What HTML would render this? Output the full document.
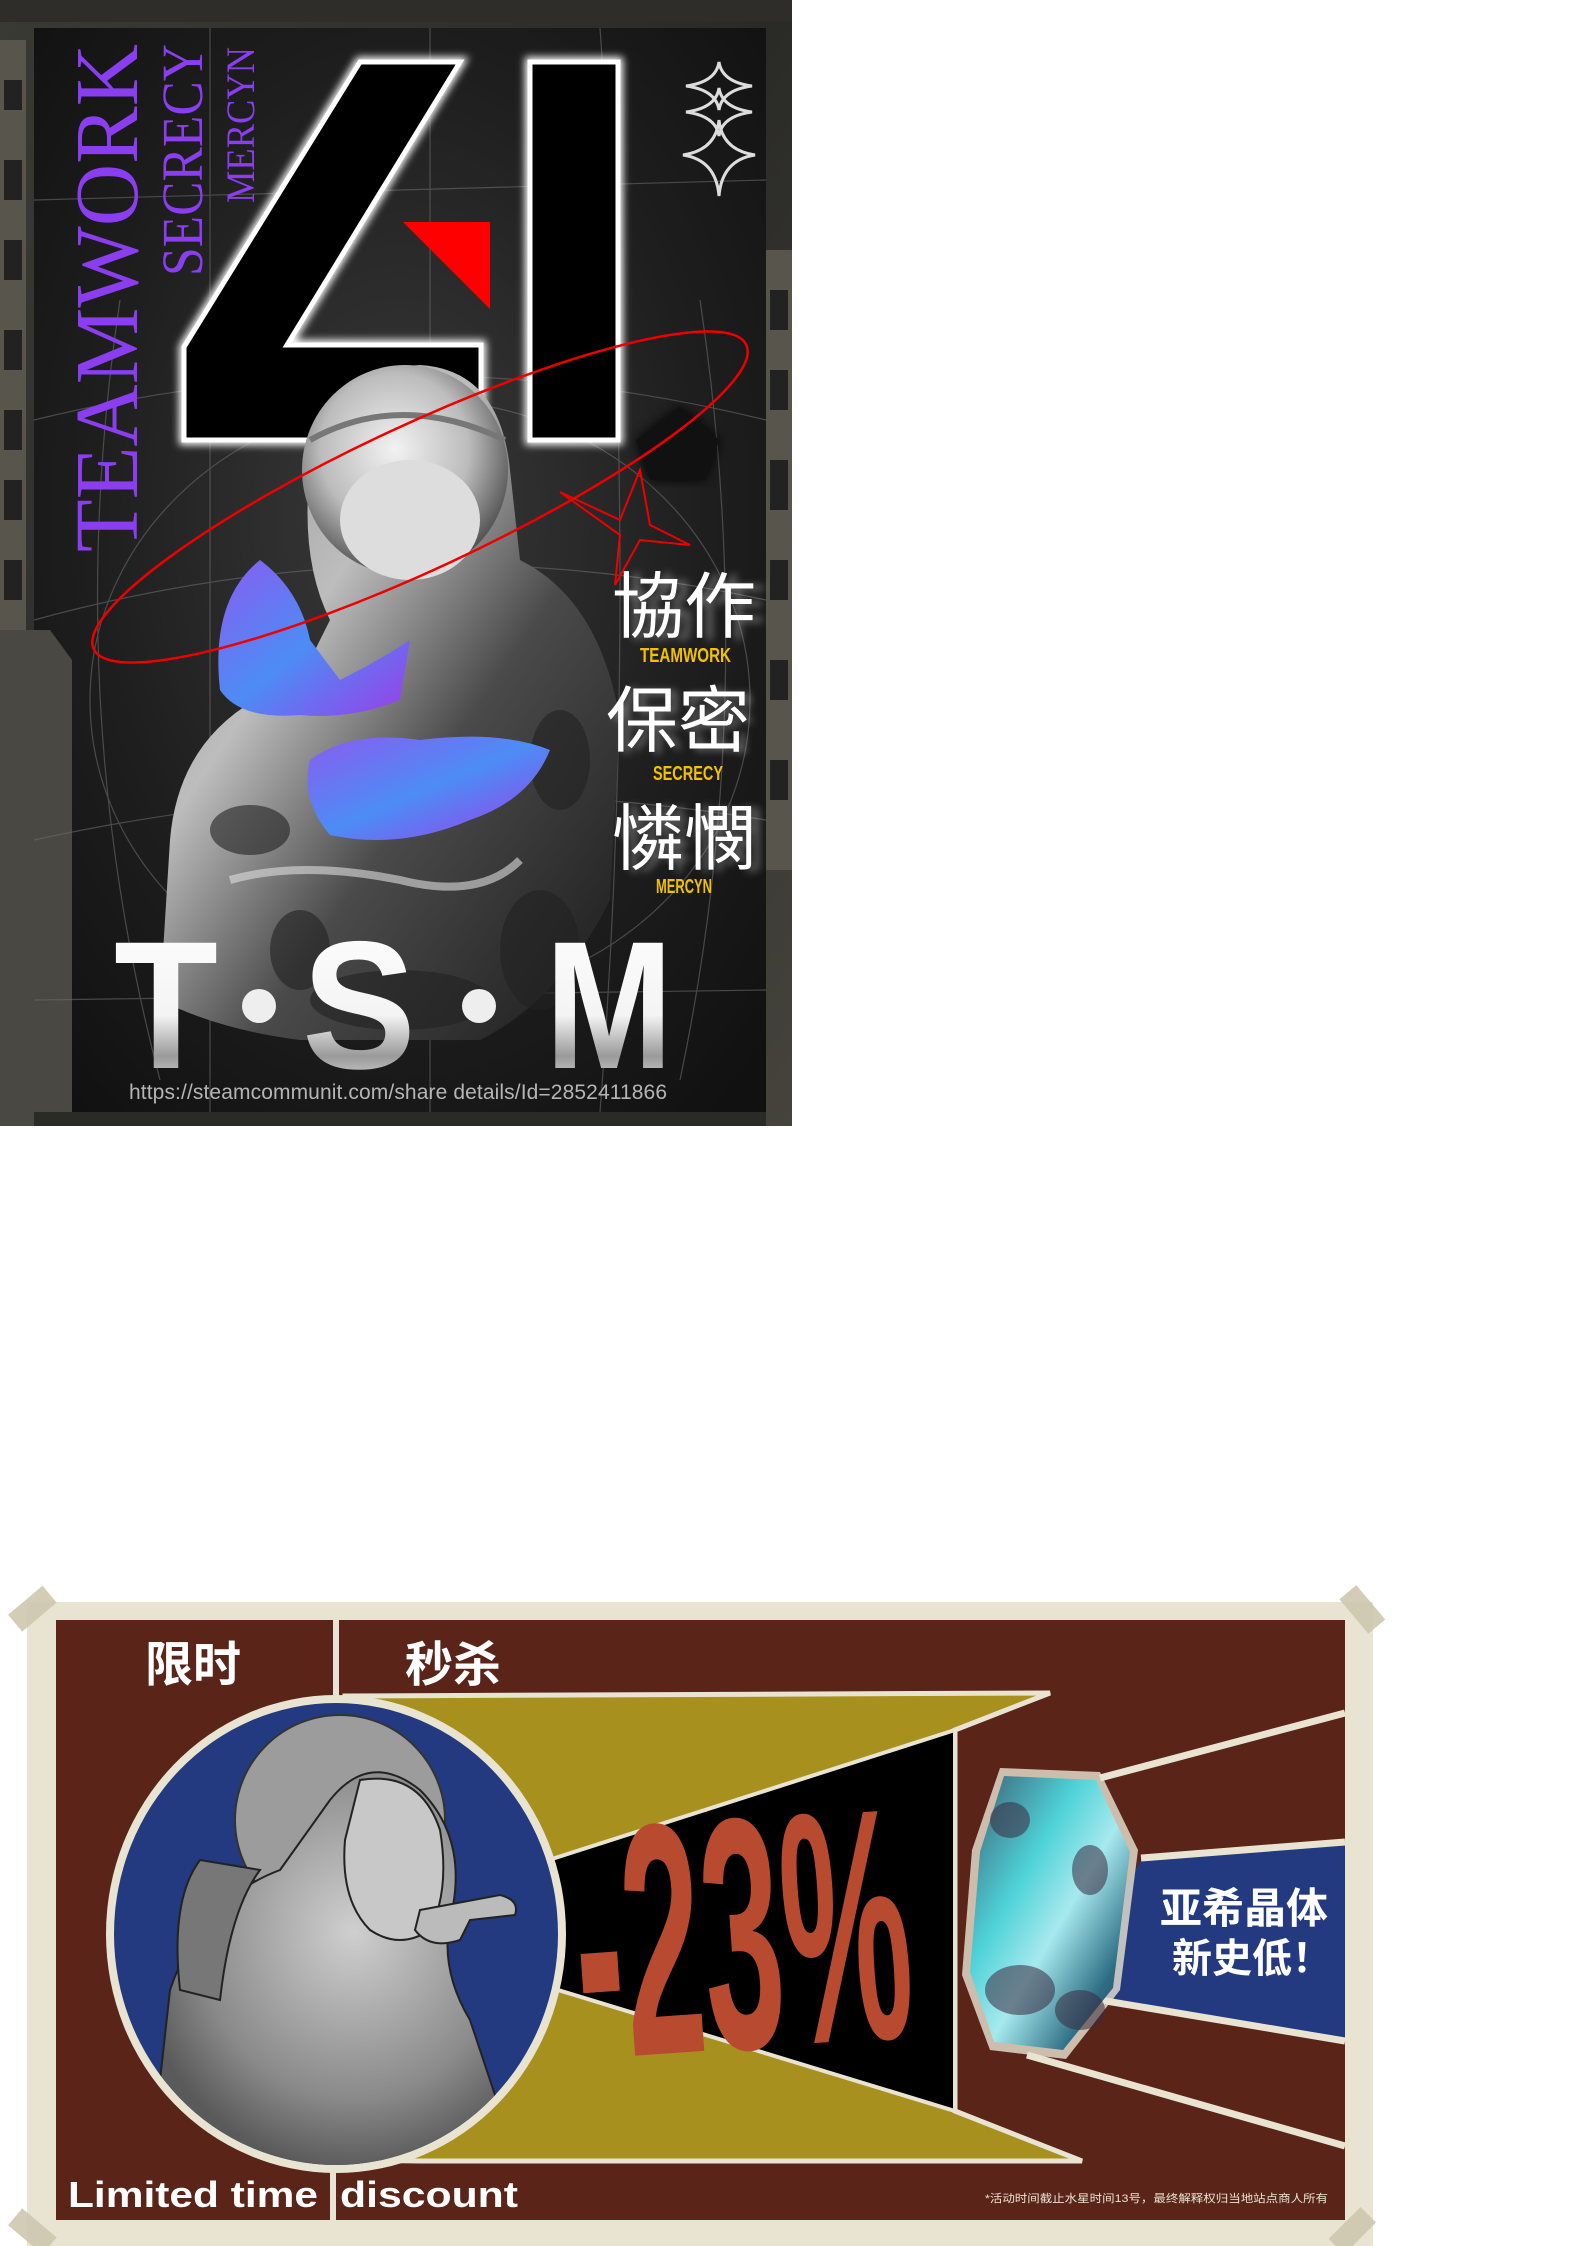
<!DOCTYPE html>
<html><head><meta charset="utf-8"><style>
html,body{margin:0;padding:0;background:#fff;width:1578px;height:2246px;overflow:hidden;position:relative}
svg{position:absolute;left:0;display:block}
</style></head><body>
<svg style="top:0" width="792" height="1126" viewBox="0 0 792 1126">
<defs>
<linearGradient id="frm" x1="0" y1="0" x2="1" y2="1"><stop offset="0" stop-color="#3a3a35"/><stop offset=".5" stop-color="#2a2a27"/><stop offset="1" stop-color="#45433c"/></linearGradient>
<radialGradient id="bgd" cx=".5" cy=".45" r=".7"><stop offset="0" stop-color="#3a3a3a"/><stop offset=".6" stop-color="#1e1e1e"/><stop offset="1" stop-color="#111"/></radialGradient>
<radialGradient id="helm" cx=".45" cy=".4" r=".6"><stop offset="0" stop-color="#f2f2f2"/><stop offset=".6" stop-color="#bcbcbc"/><stop offset="1" stop-color="#555"/></radialGradient>
<linearGradient id="body" x1="0" y1="0" x2="1" y2="1"><stop offset="0" stop-color="#8a8a8a"/><stop offset=".35" stop-color="#bdbdbd"/><stop offset=".6" stop-color="#4a4a4a"/><stop offset="1" stop-color="#1a1a1a"/></linearGradient>
<linearGradient id="lob" x1="0" y1="0" x2="1" y2="1"><stop offset="0" stop-color="#8a5cf0"/><stop offset=".5" stop-color="#4d8cf5"/><stop offset="1" stop-color="#9a3ee8"/></linearGradient>
<linearGradient id="tsm" x1="0" y1="0" x2="0" y2="1"><stop offset="0" stop-color="#fff"/><stop offset=".55" stop-color="#f4f4f4"/><stop offset=".75" stop-color="#9a9a9a"/><stop offset="1" stop-color="#fff"/></linearGradient>
<filter id="glow"><feGaussianBlur stdDeviation="4"/></filter>
<filter id="blur6"><feGaussianBlur stdDeviation="6"/></filter>
</defs>
<rect width="792" height="1126" fill="url(#frm)"/>
<rect x="0" y="0" width="792" height="22" fill="#2e2d29"/>
<rect x="0" y="40" width="26" height="600" fill="#57554c"/>
<rect x="766" y="250" width="26" height="620" fill="#57554c"/>
<g fill="#222"><rect x="4" y="80" width="18" height="30"/><rect x="4" y="160" width="18" height="40"/><rect x="4" y="240" width="18" height="40"/><rect x="4" y="330" width="18" height="40"/><rect x="4" y="410" width="18" height="40"/><rect x="4" y="480" width="18" height="40"/><rect x="4" y="560" width="18" height="40"/><rect x="770" y="290" width="18" height="40"/><rect x="770" y="370" width="18" height="40"/><rect x="770" y="460" width="18" height="50"/><rect x="770" y="560" width="18" height="40"/><rect x="770" y="660" width="18" height="40"/><rect x="770" y="760" width="18" height="40"/></g>
<rect x="34" y="28" width="732" height="1084" fill="url(#bgd)"/>
<path d="M0 630 L50 630 L72 660 L72 1126 L0 1126Z" fill="#4a4842"/>
<g stroke="#6a6a6a" stroke-width="1.2" fill="none" opacity=".6">
<path d="M34 200 L766 180 M34 420 Q400 330 766 420 M34 620 Q400 520 766 600 M34 840 Q400 760 766 820 M34 1000 L766 990"/>
<path d="M210 28 L210 1112 M430 28 L430 1112 M600 28 Q640 600 600 1112 M120 300 Q60 700 160 1080 M700 300 Q760 700 680 1080"/>
<ellipse cx="420" cy="700" rx="330" ry="300"/>
</g>
<path d="M636 440 L680 407 L719 440 L705 480 L650 480Z" fill="#0a0a0a" filter="url(#blur6)" opacity=".9"/>
<path d="M636 440 L680 407 L719 440 L705 480 L650 480Z" fill="#111"/>
<!-- 4 -->
<g filter="url(#glow)" stroke="#fff" stroke-width="10" fill="none"><path d="M360 62 L460 62 L287 345 L481 345 L481 440 L184 440 L184 347Z"/><rect x="530" y="62" width="88" height="378"/></g>
<path d="M360 62 L460 62 L287 345 L481 345 L481 440 L184 440 L184 347Z" fill="#000" stroke="#fff" stroke-width="5"/>
<rect x="530" y="62" width="88" height="378" fill="#000" stroke="#fff" stroke-width="5"/>
<path d="M403 222 L490 222 L490 309Z" fill="#f00"/>
<!-- stars -->
<g fill="none" stroke="#ddd" stroke-width="3"><path d="M719 62 Q722 82 752 86 Q722 90 719 110 Q716 90 686 86 Q716 82 719 62Z"/><path d="M719 88 Q722 108 752 112 Q722 116 719 136 Q716 116 686 112 Q716 108 719 88Z"/><path d="M719 120 Q722 150 755 155 Q722 160 719 196 Q716 160 683 155 Q716 150 719 120Z"/></g>
<!-- astronaut -->
<path d="M160 1000 L170 840 Q180 720 300 680 L330 620 Q300 560 310 470 Q340 370 420 365 Q500 370 510 470 L520 560 Q600 600 620 720 L610 900 Q560 1000 480 1040 L300 1040 Q220 1030 160 1000Z" fill="url(#body)"/>
<path d="M230 880 Q300 860 400 880 Q480 900 520 860" stroke="#ddd" stroke-width="8" fill="none" opacity=".6"/>
<ellipse cx="405" cy="470" rx="103" ry="105" fill="url(#helm)"/>
<ellipse cx="410" cy="520" rx="70" ry="60" fill="#ddd"/>
<path d="M310 440 Q400 390 505 440" stroke="#777" stroke-width="6" fill="none"/>
<g fill="#222" opacity=".6"><ellipse cx="250" cy="830" rx="40" ry="25"/><ellipse cx="560" cy="760" rx="30" ry="50"/><ellipse cx="400" cy="1000" rx="90" ry="30"/><ellipse cx="540" cy="950" rx="40" ry="60"/><ellipse cx="300" cy="950" rx="30" ry="40"/></g>
<!-- lobster -->
<path d="M220 690 Q210 600 260 560 Q300 590 310 640 L340 680 Q380 660 410 640 L400 700 Q350 720 300 715 Q240 720 220 690Z" fill="url(#lob)"/>
<path d="M310 760 Q350 730 420 740 Q500 730 550 750 Q530 800 470 820 Q400 850 330 835 Q300 800 310 760Z" fill="url(#lob)"/>
<!-- red ellipse -->
<ellipse cx="420" cy="497" rx="360" ry="72" transform="rotate(-25 420 497)" fill="none" stroke="#e00" stroke-width="2.5"/>
<path d="M560 492 L620 520 L640 470 L650 525 L690 545 L640 540 L615 585 L620 535Z" fill="none" stroke="#e00" stroke-width="2"/>
<!-- vertical text -->
<g font-family="Liberation Serif, serif" fill="#8a3ef0">
<text transform="translate(137 552) rotate(-90)" font-size="90" textLength="508" lengthAdjust="spacingAndGlyphs">TEAMWORK</text>
<text transform="translate(202 276) rotate(-90)" font-size="58" textLength="232" lengthAdjust="spacingAndGlyphs">SECRECY</text>
<text transform="translate(254 203) rotate(-90)" font-size="40" textLength="156" lengthAdjust="spacingAndGlyphs">MERCYN</text>
</g>
<!-- chinese -->
<g font-family="Liberation Sans, Noto Sans CJK TC, sans-serif" fill="#fff" font-size="72">
<g opacity=".35" filter="url(#glow)"><text x="622" y="634">協作</text><text x="612" y="748">保密</text><text x="620" y="866">憐憫</text></g>
<text x="612" y="632">協作</text>
<text x="606" y="746">保密</text>
<text x="612" y="864">憐憫</text>
</g>
<g font-family="Liberation Sans Narrow, Liberation Sans, sans-serif" font-weight="bold" fill="#f2c200" font-size="20">
<text x="640" y="662" textLength="91" lengthAdjust="spacingAndGlyphs">TEAMWORK</text>
<text x="653" y="780" textLength="70" lengthAdjust="spacingAndGlyphs">SECRECY</text>
<text x="656" y="893" textLength="56" lengthAdjust="spacingAndGlyphs">MERCYN</text>
</g>
<!-- TSM -->
<g font-family="Liberation Sans, sans-serif" font-weight="bold" font-size="182" fill="url(#tsm)">
<text x="114" y="1068" textLength="104" lengthAdjust="spacingAndGlyphs">T</text>
<text x="302" y="1068" textLength="114" lengthAdjust="spacingAndGlyphs">S</text>
<text x="545" y="1068" textLength="128" lengthAdjust="spacingAndGlyphs">M</text>
</g>
<circle cx="259" cy="1006" r="17" fill="#eee"/><circle cx="479" cy="1006" r="17" fill="#eee"/>
<text x="129" y="1099" font-family="Liberation Sans, sans-serif" font-size="21" fill="#b5b5b5" textLength="538">https://steamcommunit.com/share details/Id=2852411866</text>
<rect x="34" y="1112" width="732" height="14" fill="#2a2a26"/>
</svg>

<svg style="top:1570px" width="1420" height="676" viewBox="0 0 1420 676">
<defs>
<clipPath id="ov"><ellipse cx="336" cy="364" rx="222" ry="231"/></clipPath>
<linearGradient id="gem" x1="0" y1="0" x2="1" y2="1"><stop offset="0" stop-color="#3b5a70"/><stop offset=".35" stop-color="#4fd3d8"/><stop offset=".55" stop-color="#a7e9ee"/><stop offset=".8" stop-color="#2d6d84"/><stop offset="1" stop-color="#3a2f40"/></linearGradient>
<radialGradient id="pg" cx=".55" cy=".4" r=".6"><stop offset="0" stop-color="#cfcfcf"/><stop offset=".7" stop-color="#8a8a8a"/><stop offset="1" stop-color="#5a5a5a"/></radialGradient>
</defs>
<rect x="27" y="32" width="1346" height="644" fill="#e9e4d2"/>
<rect x="56" y="50" width="1289" height="600" fill="#5a2419"/>
<path d="M345 126 L1050 123 L955 160 L955 541 L1082 591 L420 591 L345 590Z" fill="#a8901f" stroke="#e9e4d2" stroke-width="5"/>
<path d="M455 320 L955 160 L955 541 L545 416Z" fill="#000" stroke="#e9e4d2" stroke-width="4"/>
<path d="M1141 290 L1345 273 L1345 470 L1064 424Z" fill="#233a80"/>
<g stroke="#e9e4d2" stroke-width="7"><path d="M1100 208 L1345 143"/><path d="M1141 288 L1345 272"/><path d="M1064 424 L1345 471"/><path d="M1027 485 L1345 576"/></g>
<ellipse cx="336" cy="364" rx="230" ry="239" fill="#e9e4d2"/>
<ellipse cx="336" cy="364" rx="222" ry="231" fill="#233a80"/>
<g clip-path="url(#ov)">
<circle cx="340" cy="250" r="105" fill="#9c9c9c" stroke="#333" stroke-width="2"/>
<path d="M150 600 L170 420 Q200 330 280 300 L330 230 Q370 180 420 220 Q470 270 450 350 Q440 400 470 450 L520 600Z" fill="url(#pg)" stroke="#222" stroke-width="2"/>
<path d="M360 210 Q420 200 440 260 Q450 320 430 360 Q400 380 370 360 Q340 330 345 270Z" fill="#c8c8c8" stroke="#222" stroke-width="2"/>
<path d="M200 290 Q170 330 180 420 L220 430 Q230 340 260 300Z" fill="#777" stroke="#222" stroke-width="2"/>
</g>
<path d="M420 340 L500 325 Q520 330 515 345 L470 350 L460 370 Q430 380 415 360Z" fill="#bbb" stroke="#222" stroke-width="2"/>
<text x="573" y="478" font-family="Liberation Sans Narrow, Liberation Sans, sans-serif" font-weight="bold" font-size="330" fill="#b84a30" textLength="336" lengthAdjust="spacingAndGlyphs" transform="rotate(-4 740 350)">-23%</text>
<path d="M1000 198 L1100 202 L1138 280 L1120 420 L1066 489 L990 480 L962 405 L972 280Z" fill="#e9e4d2" opacity=".8"/>
<path d="M1004 206 L1096 210 L1130 282 L1113 418 L1063 480 L994 472 L970 402 L980 282Z" fill="url(#gem)"/>
<g fill="#3a2a40" opacity=".55"><ellipse cx="1020" cy="420" rx="35" ry="25"/><ellipse cx="1080" cy="440" rx="25" ry="20"/><ellipse cx="1010" cy="250" rx="20" ry="18"/><ellipse cx="1090" cy="300" rx="18" ry="25"/></g>
<rect x="333" y="50" width="6" height="76" fill="#e9e4d2"/>
<rect x="330" y="597" width="6" height="53" fill="#e9e4d2"/>
<g font-family="Liberation Sans, Noto Sans CJK SC, sans-serif" font-weight="bold" fill="#fff">
<text x="145" y="111" font-size="48">限时</text>
<text x="405" y="111" font-size="48">秒杀</text>
<text x="1160" y="353" font-size="42">亚希晶体</text>
<text x="1172" y="402" font-size="40">新史低！</text>
<text x="68" y="637" font-size="36" textLength="250" lengthAdjust="spacingAndGlyphs">Limited time</text>
<text x="340" y="637" font-size="36" textLength="178" lengthAdjust="spacingAndGlyphs">discount</text>
<text x="985" y="632" font-size="11" font-weight="normal" fill="#e9e4d2" textLength="343" lengthAdjust="spacingAndGlyphs">*活动时间截止水星时间13号，最终解释权归当地站点商人所有</text>
</g>
<g fill="#cfc7ae" opacity=".9"><rect x="10" y="28" width="45" height="22" transform="rotate(-40 32 39)"/><rect x="1340" y="28" width="45" height="22" transform="rotate(50 1362 39)"/><rect x="10" y="650" width="45" height="22" transform="rotate(40 32 661)"/><rect x="1330" y="650" width="45" height="22" transform="rotate(-45 1352 661)"/></g>
</svg>
</body></html>
